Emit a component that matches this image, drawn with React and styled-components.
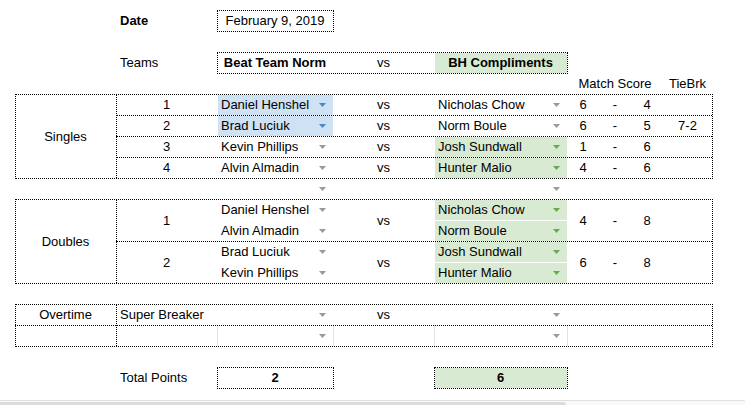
import { Fragment } from "react"
import styled, { createGlobalStyle } from "styled-components"

const GlobalStyle = createGlobalStyle`
    html, body {
        margin: 0;
        background: #fff;
    }
    body {
        font-family: "Liberation Sans", Arial, sans-serif;
        font-size: 13px;
        color: #000;
        overflow: hidden;
    }
`

const fills = {
    blue: "#cfe2f3",
    green: "#d9ead3",
}

const caretColors = {
    blue: "#4a86c8",
    green: "#6aa84f",
    plain: "#999999",
}

const Page = styled.div`
    width: 745px;
    height: 405px;
    display: flex;
    flex-direction: column;
    overflow: hidden;
`

// columns: gutter, A, B, C, D, E, F, G, H, I, rest
const Sheet = styled.div`
    flex: 1;
    display: grid;
    grid-template-columns: 15px 101px 101px 116px 101px 133px 32px 32px 32px 49px 1fr;
    grid-template-rows: 10px repeat(18, 21px) 1fr;
`

const Cell = styled.div`
    grid-column: ${p => p.$col};
    grid-row: ${p => p.$row};
    display: flex;
    align-items: center;
    justify-content: ${p => (p.$center ? "center" : "flex-start")};
    padding: 0 4px;
    min-width: 0;
    white-space: nowrap;
    font-weight: ${p => (p.$bold ? 700 : 400)};
    background: ${p => fills[p.$fill] || "transparent"};
    box-shadow: ${p => (p.$fill ? "inset 1px 1px 0 #fff" : "none")};
`

const Pick = styled(Cell)`
    justify-content: space-between;
    padding-right: 7px;
`

const GridCell = styled.div`
    grid-column: ${p => p.$col};
    grid-row: ${p => p.$row};
    border-left: 1px solid #e2e2e2;
`

const Frame = styled.div`
    grid-column: ${p => p.$col};
    grid-row: ${p => p.$row};
    border: 1px dotted #000;
    margin: 0 -1px -1px 0;
    pointer-events: none;
`

const Rule = styled.div`
    grid-column: ${p => p.$col};
    grid-row: ${p => p.$row};
    border-${p => p.$edge}: 1px dotted #000;
    pointer-events: none;
`

const CaretIcon = styled.svg`
    flex: none;
    display: block;
`

const ScrollBar = styled.div`
    height: 4px;
    border-top: 1px solid #e0e0e0;
    background: #f8f9fa;
    display: flex;
`

const Thumb = styled.div`
    width: 566px;
    margin-top: 1px;
    background: #dadce0;
    border-radius: 0 3px 0 0;
`

const Caret = ({ tone = "plain" }) => (
    <CaretIcon width="7" height="4" viewBox="0 0 7 4">
        <path d="M0 0h7L3.5 4z" fill={caretColors[tone]} />
    </CaretIcon>
)

const Player = ({ col, row, name, fill }) => (
    <Pick $col={col} $row={row} $fill={fill}>
        <span>{name}</span>
        <Caret tone={fill || "plain"} />
    </Pick>
)

const singles = [
    { no: 1, home: "Daniel Henshel", away: "Nicholas Chow", win: "home", score: ["6", "4"] },
    { no: 2, home: "Brad Luciuk", away: "Norm Boule", win: "home", score: ["6", "5"], tb: "7-2" },
    { no: 3, home: "Kevin Phillips", away: "Josh Sundwall", win: "away", score: ["1", "6"] },
    { no: 4, home: "Alvin Almadin", away: "Hunter Malio", win: "away", score: ["4", "6"] },
]

const doubles = [
    { no: 1, home: ["Daniel Henshel", "Alvin Almadin"], away: ["Nicholas Chow", "Norm Boule"], win: "away", score: ["4", "8"] },
    { no: 2, home: ["Brad Luciuk", "Kevin Phillips"], away: ["Josh Sundwall", "Hunter Malio"], win: "away", score: ["6", "8"] },
]

const Score = ({ row, score, tb }) => (
    <>
        <Cell $col="7" $row={row} $center>{score[0]}</Cell>
        <Cell $col="8" $row={row} $center>-</Cell>
        <Cell $col="9" $row={row} $center>{score[1]}</Cell>
        {tb && <Cell $col="10" $row={row} $center>{tb}</Cell>}
    </>
)

const App = () => {
    return (
        <Page>
            <GlobalStyle />
            <Sheet>
                <Cell $col="3" $row="2" $bold>Date</Cell>
                <Cell $col="4" $row="2" $center>February 9, 2019</Cell>

                <Cell $col="3" $row="4">Teams</Cell>
                <Cell $col="4" $row="4" $center $bold>Beat Team Norm</Cell>
                <Cell $col="5" $row="4" $center>vs</Cell>
                <Cell $col="6" $row="4" $center $bold $fill="green">BH Compliments</Cell>

                <Cell $col="7 / 10" $row="5" $center>Match Score</Cell>
                <Cell $col="10" $row="5" $center>TieBrk</Cell>

                <Cell $col="2" $row="6 / 10" $center>Singles</Cell>
                {singles.map((m, i) => {
                    const row = `${6 + i}`
                    return (
                        <Fragment key={m.no}>
                            <Cell $col="3" $row={row} $center>{m.no}</Cell>
                            <Player col="4" row={row} name={m.home} fill={m.win === "home" ? "blue" : null} />
                            <Cell $col="5" $row={row} $center>vs</Cell>
                            <Player col="6" row={row} name={m.away} fill={m.win === "away" ? "green" : null} />
                            <Score row={row} score={m.score} tb={m.tb} />
                        </Fragment>
                    )
                })}

                <Player col="4" row="10" name="" />
                <Player col="6" row="10" name="" />

                <Cell $col="2" $row="11 / 15" $center>Doubles</Cell>
                {doubles.map((m, i) => {
                    const top = 11 + i * 2
                    const span = `${top} / span 2`
                    return (
                        <Fragment key={m.no}>
                            <Cell $col="3" $row={span} $center>{m.no}</Cell>
                            {m.home.map((name, j) => (
                                <Player key={name} col="4" row={`${top + j}`} name={name} fill={m.win === "home" ? "blue" : null} />
                            ))}
                            <Cell $col="5" $row={span} $center>vs</Cell>
                            {m.away.map((name, j) => (
                                <Player key={name} col="6" row={`${top + j}`} name={name} fill={m.win === "away" ? "green" : null} />
                            ))}
                            <Score row={span} score={m.score} />
                        </Fragment>
                    )
                })}

                <Cell $col="2" $row="16" $center>Overtime</Cell>
                <Player col="3 / 5" row="16" name="Super Breaker" />
                <Cell $col="5" $row="16" $center>vs</Cell>
                <Player col="6" row="16" name="" />

                <GridCell $col="4" $row="17" />
                <GridCell $col="5" $row="17" />
                <GridCell $col="6" $row="17" />
                <GridCell $col="7 / 11" $row="17" />
                <Player col="4" row="17" name="" />
                <Player col="6" row="17" name="" />

                <Cell $col="3" $row="19">Total Points</Cell>
                <Cell $col="4" $row="19" $center $bold>2</Cell>
                <Cell $col="6" $row="19" $center $bold $fill="green">6</Cell>

                <Frame $col="4" $row="2" />
                <Frame $col="4 / 7" $row="4" />

                <Frame $col="2 / 11" $row="6 / 10" />
                <Rule $edge="left" $col="3 / 11" $row="6 / 10" />
                <Rule $edge="top" $col="3 / 11" $row="7" />
                <Rule $edge="top" $col="3 / 11" $row="8" />
                <Rule $edge="top" $col="3 / 11" $row="9" />

                <Frame $col="2 / 11" $row="11 / 15" />
                <Rule $edge="left" $col="3 / 11" $row="11 / 15" />
                <Rule $edge="top" $col="3 / 11" $row="13 / 15" />

                <Frame $col="2 / 11" $row="16 / 18" />
                <Rule $edge="left" $col="3 / 11" $row="16 / 18" />
                <Rule $edge="top" $col="2 / 11" $row="17" />

                <Frame $col="4" $row="19" />
                <Frame $col="6" $row="19" />
            </Sheet>
            <ScrollBar>
                <Thumb />
            </ScrollBar>
        </Page>
    )
}

export default App
